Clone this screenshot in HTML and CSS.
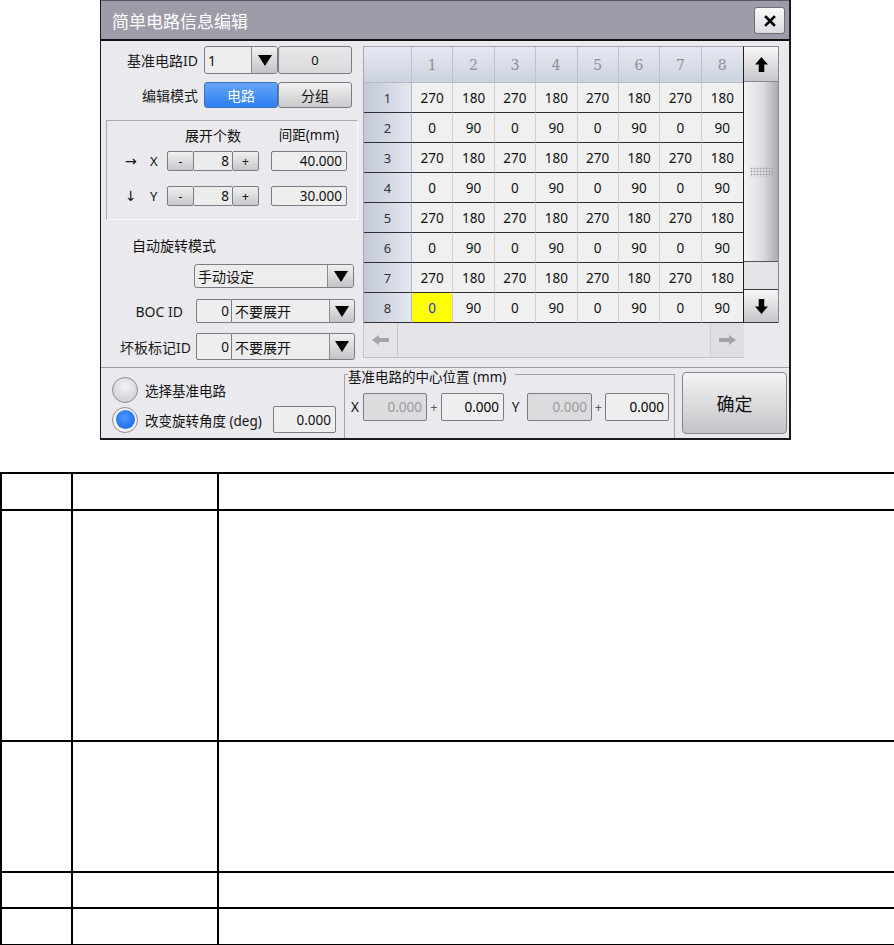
FILE: index.html
```html
<!DOCTYPE html>
<html>
<head>
<meta charset="utf-8">
<title>简单电路信息编辑</title>
<link rel="stylesheet" href="styles.css">
</head>
<body>
<div class="shot">
  <div class="win">
    <div class="titlebar">
      <span class="title">简单电路信息编辑</span>
      <div class="close"><svg viewBox="0 0 12 12" width="12" height="12"><path d="M2 2 L10 10 M10 2 L2 10" stroke="#000" stroke-width="2.6" stroke-linecap="square"/></svg></div>
    </div>
    <div class="wbody">
      <div class="top">
        <div class="left">
          <div class="row r1">
            <span class="lbl l97">基准电路ID</span>
            <div class="combo w74"><span class="ctext">1</span><span class="carrow"><svg viewBox="0 0 14 11" width="14" height="11"><polygon points="0,0 14,0 7,11" fill="#000"/></svg></span></div>
            <div class="gbox w74">0</div>
          </div>
          <div class="row r2">
            <span class="lbl l97">编辑模式</span>
            <div class="btn blue w74">电路</div>
            <div class="btn w74">分组</div>
          </div>
          <div class="group">
            <div class="grow ghead"><span class="gpre"></span><span class="gh1">展开个数</span><span class="gh2">间距(mm)</span></div>
            <div class="grow gx"><span class="garrow">→</span><span class="gaxis">X</span><div class="spin"><div class="sbtn">-</div><div class="sval">8</div><div class="sbtn">+</div></div><div class="field dist">40.000</div></div>
            <div class="grow gy"><span class="garrow">↓</span><span class="gaxis">Y</span><div class="spin"><div class="sbtn">-</div><div class="sval">8</div><div class="sbtn">+</div></div><div class="field dist">30.000</div></div>
          </div>
          <div class="autolbl">自动旋转模式</div>
          <div class="combo mode"><span class="ctext">手动设定</span><span class="carrow"><svg viewBox="0 0 14 11" width="14" height="11"><polygon points="0,0 14,0 7,11" fill="#000"/></svg></span></div>
          <div class="row r5">
            <span class="lbl lboc">BOC ID</span>
            <div class="field idf">0</div>
            <div class="combo wsel"><span class="ctext">不要展开</span><span class="carrow"><svg viewBox="0 0 14 11" width="14" height="11"><polygon points="0,0 14,0 7,11" fill="#000"/></svg></span></div>
          </div>
          <div class="row r6">
            <span class="lbl lbad">坏板标记ID</span>
            <div class="field idf">0</div>
            <div class="combo wsel"><span class="ctext">不要展开</span><span class="carrow"><svg viewBox="0 0 14 11" width="14" height="11"><polygon points="0,0 14,0 7,11" fill="#000"/></svg></span></div>
          </div>
        </div>
        <div class="tablearea">
          <div class="tmain">
            <div class="grid">
              <div class="hc corner"></div>
              <div class="hc">1</div><div class="hc">2</div><div class="hc">3</div><div class="hc">4</div><div class="hc">5</div><div class="hc">6</div><div class="hc">7</div><div class="hc">8</div>
              <div class="rh">1</div><div class="c">270</div><div class="c">180</div><div class="c">270</div><div class="c">180</div><div class="c">270</div><div class="c">180</div><div class="c">270</div><div class="c">180</div>
              <div class="rh">2</div><div class="c">0</div><div class="c">90</div><div class="c">0</div><div class="c">90</div><div class="c">0</div><div class="c">90</div><div class="c">0</div><div class="c">90</div>
              <div class="rh">3</div><div class="c">270</div><div class="c">180</div><div class="c">270</div><div class="c">180</div><div class="c">270</div><div class="c">180</div><div class="c">270</div><div class="c">180</div>
              <div class="rh">4</div><div class="c">0</div><div class="c">90</div><div class="c">0</div><div class="c">90</div><div class="c">0</div><div class="c">90</div><div class="c">0</div><div class="c">90</div>
              <div class="rh">5</div><div class="c">270</div><div class="c">180</div><div class="c">270</div><div class="c">180</div><div class="c">270</div><div class="c">180</div><div class="c">270</div><div class="c">180</div>
              <div class="rh">6</div><div class="c">0</div><div class="c">90</div><div class="c">0</div><div class="c">90</div><div class="c">0</div><div class="c">90</div><div class="c">0</div><div class="c">90</div>
              <div class="rh">7</div><div class="c">270</div><div class="c">180</div><div class="c">270</div><div class="c">180</div><div class="c">270</div><div class="c">180</div><div class="c">270</div><div class="c">180</div>
              <div class="rh">8</div><div class="c sel">0</div><div class="c">90</div><div class="c">0</div><div class="c">90</div><div class="c">0</div><div class="c">90</div><div class="c">0</div><div class="c">90</div>
            </div>
            <div class="vscroll">
              <div class="vbtn up"><svg viewBox="0 0 14 16" width="13" height="15"><path d="M7 0 L14 8 L10 8 L10 16 L4 16 L4 8 L0 8 Z" fill="#000"/></svg></div>
              <div class="thumb"><span class="grip"></span></div>
              <div class="vtrack"></div>
              <div class="vbtn down"><svg viewBox="0 0 14 16" width="13" height="15"><path d="M7 16 L14 8 L10 8 L10 0 L4 0 L4 8 L0 8 Z" fill="#000"/></svg></div>
            </div>
          </div>
          <div class="hscroll">
            <div class="hbtn hl"><svg viewBox="0 0 17 10" width="17" height="10"><path d="M0 5 L7 0 L7 3 L17 3 L17 7 L7 7 L7 10 Z" fill="#a4a4a8"/></svg></div>
            <div class="htrack"></div>
            <div class="hbtn hr"><svg viewBox="0 0 17 10" width="17" height="10"><path d="M17 5 L10 0 L10 3 L0 3 L0 7 L10 7 L10 10 Z" fill="#a4a4a8"/></svg></div>
          </div>
        </div>
      </div>
      <div class="bottom">
        <div class="radios">
          <div class="rrow"><span class="radio"></span><span class="rtext">选择基准电路</span></div>
          <div class="rrow r2b"><span class="radio on"><span class="dot"></span></span><span class="rtext">改变旋转角度 (deg)</span><div class="field degf">0.000</div></div>
        </div>
        <div class="cgroup">
          <span class="legend">基准电路的中心位置 (mm)</span>
          <div class="crow">
            <span class="cx">X</span>
            <div class="field dis f64">0.000</div>
            <span class="plus p14">+</span>
            <div class="field f63 strong">0.000</div>
            <span class="cy">Y</span>
            <div class="field dis f65">0.000</div>
            <span class="plus p13">+</span>
            <div class="field f64 strong">0.000</div>
          </div>
        </div>
        <div class="ok">确定</div>
      </div>
    </div>
  </div>
</div>
<table class="doc">
  <colgroup><col class="c1"><col class="c2"><col class="c3"></colgroup>
  <tr class="h37"><td></td><td></td><td></td></tr>
  <tr class="h231"><td></td><td></td><td></td></tr>
  <tr class="h131"><td></td><td></td><td></td></tr>
  <tr class="h36"><td></td><td></td><td></td></tr>
  <tr class="h37b"><td></td><td></td><td></td></tr>
</table>
</body>
</html>
```
FILE: styles.css
```css
* { box-sizing: border-box; }
body {
  margin: 0;
  background: #fff;
  font-family: "Noto Sans", "Noto Sans CJK SC", sans-serif;
  color: #111;
}
.shot { margin-left: 100px; width: 692px; height: 440px; }
.win {
  width: 691px;
  height: 440px;
  border-left: 1px solid #1c1c1c;
  border-right: 2px solid #1c1c1c;
  border-bottom: 2px solid #1c1c1c;
  background: #eaeaee;
  display: flex;
  flex-direction: column;
}
.titlebar {
  height: 41px;
  flex: none;
  background: #9f9caa;
  border-top: 1px solid #5a5866;
  border-bottom: 2px solid #111;
  display: flex;
  align-items: center;
  padding-left: 11px;
  padding-right: 4px;
}
.title {
  color: #fff;
  font-family: "Noto Sans CJK SC", sans-serif;
  font-size: 17px;
}
.close {
  margin-left: auto;
  width: 31px;
  height: 27px;
  margin-top: 1px;
  border: 1px solid #6e6e78;
  border-radius: 3px;
  background: linear-gradient(#fafafa, #dcdce0);
  display: flex;
  align-items: center;
  justify-content: center;
}
.wbody { flex: 1; display: flex; flex-direction: column; }
.top { height: 326px; display: flex; flex: none; }
.left { width: 260px; padding-top: 5px; display: flex; flex-direction: column; }
.row { display: flex; align-items: stretch; }
.r1 { height: 28px; }
.r2 { height: 26px; margin-top: 8px; }
.lbl {
  font-family: "Noto Sans", "Noto Sans CJK SC", sans-serif;
  font-size: 14px;
  display: flex;
  align-items: center;
  justify-content: flex-end;
  color: #1a1a1a;
}
.l97 { width: 97px; margin-right: 6px; }
.lboc { width: 82px; margin-right: 13px; }
.lbad { width: 90px; margin-right: 5px; }
.w74 { width: 74px; }
.combo {
  display: flex;
  border: 1px solid #7c7c84;
  border-radius: 3px;
  background: #ededed;
  overflow: hidden;
}
.ctext {
  flex: 1;
  display: flex;
  align-items: center;
  padding-left: 3px;
  font-size: 14px;
  font-family: "Noto Sans", "Noto Sans CJK SC", sans-serif;
}
.carrow {
  width: 26px;
  border-left: 1px solid #8a8a90;
  background: linear-gradient(#f0f0f0, #c4c4c8);
  display: flex;
  align-items: center;
  justify-content: center;
}
.gbox {
  border: 1px solid #7c7c84;
  border-radius: 3px;
  background: linear-gradient(#e8e8ea, #dadadc);
  display: flex;
  align-items: center;
  justify-content: center;
  font-size: 13px;
}
.btn {
  border: 1px solid #7c7c84;
  border-radius: 3px;
  background: linear-gradient(#f2f2f2, #cacacd);
  display: flex;
  align-items: center;
  justify-content: center;
  font-size: 14px;
  font-family: "Noto Sans CJK SC", sans-serif;
}
.btn.blue {
  background: linear-gradient(#64a4f8, #2f7ff0);
  border-color: #3b6fc4;
  color: #fff;
}
.group {
  margin-top: 12px;
  margin-left: 5px;
  width: 252px;
  height: 100px;
  border-top: 1px solid #a9a9b0;
  border-left: 1px solid #a9a9b0;
  border-right: 1px solid #fbfbfd;
  border-bottom: 1px solid #fbfbfd;
  padding-top: 5px;
}
.grow { display: flex; align-items: stretch; }
.ghead { height: 18px; font-size: 14px; font-family: "Noto Sans CJK SC", sans-serif; line-height: 18px; }
.gpre { width: 60px; }
.gh1 { width: 92px; text-align: center; }
.gh2 { width: 76px; margin-left: 12px; text-align: center; font-family: "Noto Sans", "Noto Sans CJK SC", sans-serif; font-size: 13.5px; }
.gx { height: 20px; margin-top: 7px; }
.gy { height: 20px; margin-top: 15px; }
.garrow { width: 43px; padding-left: 18px; display: flex; align-items: center; font-size: 14px; font-family: "DejaVu Sans", sans-serif; }
.gaxis { width: 17px; display: flex; align-items: center; font-size: 13px; }
.spin { display: flex; width: 92px; }
.sbtn {
  width: 27px;
  border: 1px solid #7c7c84;
  border-radius: 2px;
  background: linear-gradient(#f0f0f0, #c8c8cc);
  display: flex;
  align-items: center;
  justify-content: center;
  font-size: 12px;
}
.sval {
  width: 38px;
  border-top: 1px solid #7c7c84;
  border-bottom: 1px solid #7c7c84;
  background: #ececec;
  display: flex;
  align-items: center;
  justify-content: flex-end;
  padding-right: 3px;
  font-size: 13.5px;
}
.field {
  border: 1px solid #7c7c84;
  border-radius: 2px;
  background: #eeeeee;
  display: flex;
  align-items: center;
  justify-content: flex-end;
  padding-right: 4px;
  font-size: 13.5px;
}
.dist { width: 76px; margin-left: 12px; }
.autolbl {
  margin-top: 16px;
  height: 18px;
  padding-left: 31px;
  font-size: 14px;
  line-height: 18px;
  font-family: "Noto Sans CJK SC", sans-serif;
}
.combo.mode { margin-top: 10px; margin-left: 93px; width: 160px; height: 24px; }
.r5 { height: 24px; margin-top: 11px; }
.r6 { height: 27px; margin-top: 10px; }
.idf { width: 36px; border-radius: 2px 0 0 2px; padding-right: 2px; }
.wsel { width: 123px; border-radius: 0 3px 3px 0; border-left: none; }
.wsel .carrow { width: 25px; }

.tablearea { padding-top: 5px; padding-left: 2px; }
.tmain { display: flex; }
.grid {
  width: 381px;
  height: 277px;
  display: grid;
  grid-template-columns: 48px repeat(8, 1fr);
  grid-template-rows: 36px repeat(8, 30px);
  border-left: 1px solid #a6a6ae;
  border-top: 1px solid #a6a6ae;
  border-right: 1px solid #1e1e1e;
}
.hc {
  background: linear-gradient(#e6e9f2, #ccd2e0);
  border-right: 1px solid #bcc2d0;
  border-bottom: 1px solid #b4bac8;
  display: flex;
  align-items: center;
  justify-content: center;
  font-family: "DejaVu Serif", serif;
  font-size: 14px;
  color: #8e8e92;
}
.hc:nth-child(9) { border-right: none; }
.rh {
  background: linear-gradient(to right, #c2c8d8, #e4e7ef);
  border-right: 1px solid #b4b8c4;
  border-bottom: 1px solid #2e2e32;
  display: flex;
  align-items: center;
  justify-content: center;
  font-size: 13px;
  color: #333;
}
.c {
  background: #f0f0f0;
  border-right: 1px solid #cfcfd2;
  border-bottom: 1px solid #2e2e32;
  display: flex;
  align-items: center;
  justify-content: center;
  font-size: 13.5px;
  color: #111;
}
.c:nth-child(9n) { border-right: none; }
.c.sel { background: #ffff00; color: #1a2fe0; }
.vscroll {
  width: 35px;
  height: 277px;
  display: flex;
  flex-direction: column;
  border-top: 1px solid #8a8a90;
  border-right: 1px solid #8a8a90;
}
.vbtn {
  display: flex;
  align-items: center;
  justify-content: center;
  background: linear-gradient(#f8f8f8, #c6c6ca);
}
.vbtn.up { height: 35px; border-bottom: 1px solid #8a8a90; }
.vbtn.down { height: 34px; border-top: 1px solid #3a3a3e; border-bottom: 1px solid #3a3a3e; }
.thumb {
  height: 180px;
  background: linear-gradient(to right, #f4f4f6, #dcdce0 55%, #acacb2);
  border-bottom: 1px solid #555;
  display: flex;
  align-items: center;
  justify-content: center;
}
.grip {
  width: 23px;
  height: 10px;
  background-image: radial-gradient(circle, #9a9aa0 0.8px, transparent 1.1px);
  background-size: 3px 3px;
}
.vtrack { height: 27px; background: #e4e4e8; }
.hscroll {
  width: 381px;
  height: 35px;
  display: flex;
  border-left: 1px solid #c4c4ca;
  border-bottom: 1px solid #c4c4ca;
  background: #e4e4e8;
}
.hbtn { display: flex; align-items: center; justify-content: center; }
.hl { width: 34px; border-right: 1px solid #c4c4ca; }
.htrack { flex: 1; }
.hr { width: 34px; border-left: 1px solid #d0d0d4; background: #dfdfe3; }

.bottom {
  height: 71px;
  flex: none;
  border-top: 1px solid #9c9ca4;
  display: flex;
}
.radios { width: 235px; padding-left: 11px; padding-top: 9px; display: flex; flex-direction: column; }
.rrow { height: 26px; display: flex; align-items: center; }
.r2b { margin-top: 3px; height: 27px; }
.radio {
  width: 26px;
  height: 26px;
  border-radius: 50%;
  border: 1px solid #8c8c94;
  background: radial-gradient(circle at 50% 35%, #f4f4f6, #c6c6cc);
  flex: none;
  display: flex;
  align-items: center;
  justify-content: center;
}
.radio.on { background: #f2f2f4; }
.dot {
  width: 19px;
  height: 19px;
  border-radius: 50%;
  background: radial-gradient(circle at 45% 40%, #4d98ff, #0e60e0);
}
.rtext {
  margin-left: 7px;
  font-size: 13.5px;
  font-family: "Noto Sans", "Noto Sans CJK SC", sans-serif;
}
.degf { width: 63px; height: 27px; margin-left: auto; }
.cgroup {
  margin-left: 8px;
  margin-top: 6px;
  width: 331px;
  border: 1px solid #a4a4ac;
  border-bottom: none;
  display: flex;
  flex-direction: column;
  align-items: flex-start;
}
.legend {
  margin-top: -7px;
  margin-left: 3px;
  padding: 0 9px 0 0;
  background: #eaeaee;
  font-size: 13.5px;
  line-height: 18px;
  font-family: "Noto Sans", "Noto Sans CJK SC", sans-serif;
}
.crow { display: flex; height: 28px; margin-top: 7px; padding-left: 6px; }
.cx { width: 12px; display: flex; align-items: center; font-size: 13.5px; }
.cy { width: 23px; display: flex; align-items: center; justify-content: center; font-size: 13.5px; }
.plus { display: flex; align-items: center; justify-content: center; font-size: 12px; color: #555; }
.p14 { width: 14px; }
.p13 { width: 13px; }
.f64 { width: 64px; }
.f63 { width: 63px; }
.f65 { width: 65px; }
.field.dis { background: #dcdcde; color: #9a9a9e; }
.field.strong { color: #000; }
.ok {
  margin-left: 7px;
  margin-top: 4px;
  width: 105px;
  height: 62px;
  border: 1px solid #86868e;
  border-radius: 4px;
  background: linear-gradient(#f4f4f4, #c4c4c8);
  display: flex;
  align-items: center;
  justify-content: center;
  font-size: 18px;
  font-family: "Noto Sans CJK SC", sans-serif;
}

.doc {
  margin-top: 32px;
  width: 894px;
  border-collapse: collapse;
  table-layout: fixed;
}
.doc td { border: 2px solid #000; padding: 0; }
.c1 { width: 71px; }
.c2 { width: 146px; }
.c3 { width: 677px; }
.h37 td { height: 37px; }
.h231 td { height: 231px; }
.h131 td { height: 131px; }
.h36 td { height: 36px; }
.h37b td { height: 37px; }
```
